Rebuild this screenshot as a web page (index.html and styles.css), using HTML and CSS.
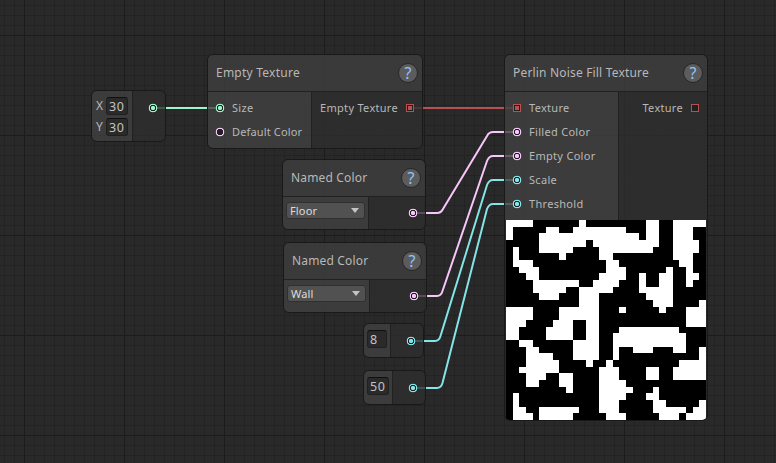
FILE: index.html
```
<!DOCTYPE html>
<html lang="en">
<head>
<meta charset="utf-8">
<title>Texture Graph</title>
<link rel="stylesheet" href="styles.css">
</head>
<body>
<main class="canvas">
  <svg class="wires" width="776" height="463" fill="none" stroke-width="2">
    <path class="vec" d="M153 108H220"/>
    <path class="tex" d="M410 108H517"/>
    <path class="col" d="M413 213H437Q441 213 443 209L487 136Q489 132 493 132H517"/>
    <path class="col" d="M414 296H437Q441 296 442.500 291L487 161Q489 156 493 156H517"/>
    <path class="num" d="M411 341H435Q439 341 440.500 336L487 185Q489 180 493 180H517"/>
    <path class="num" d="M413 388H437Q441 388 442.500 383L487 209Q489 204 493 204H517"/>
  </svg>

  <section class="node n-vector">
    <div class="body">
      <div class="left fields">
        <label class="field"><span>X</span><b class="box">30</b></label>
        <label class="field"><span>Y</span><b class="box">30</b></label>
      </div>
      <div class="right"><div class="port out"><i class="pin vec on"></i></div></div>
    </div>
  </section>

  <section class="node n-empty">
    <header><h2>Empty Texture</h2><span class="help">?</span></header>
    <div class="body">
      <div class="left ports">
        <div class="port"><i class="pin vec on"></i><span>Size</span></div>
        <div class="port"><i class="pin col"></i><span class="tight">Default Color</span></div>
      </div>
      <div class="right ports"><div class="port out"><span>Empty Texture</span><i class="pin tex on"></i></div></div>
    </div>
  </section>

  <section class="node n-floor named">
    <header><h2>Named Color</h2><span class="help">?</span></header>
    <div class="body">
      <div class="left"><div class="select">Floor</div></div>
      <div class="right"><div class="port out"><i class="pin col on"></i></div></div>
    </div>
  </section>

  <section class="node n-wall named">
    <header><h2>Named Color</h2><span class="help">?</span></header>
    <div class="body">
      <div class="left"><div class="select">Wall</div></div>
      <div class="right"><div class="port out"><i class="pin col on"></i></div></div>
    </div>
  </section>

  <section class="node n-eight number">
    <div class="body">
      <div class="left"><b class="box">8</b></div>
      <div class="right"><div class="port out"><i class="pin num on"></i></div></div>
    </div>
  </section>

  <section class="node n-fifty number">
    <div class="body">
      <div class="left"><b class="box">50</b></div>
      <div class="right"><div class="port out"><i class="pin num on"></i></div></div>
    </div>
  </section>

  <section class="node n-perlin">
    <header><h2>Perlin Noise Fill Texture</h2><span class="help">?</span></header>
    <div class="body">
      <div class="left ports">
        <div class="port"><i class="pin tex on"></i><span>Texture</span></div>
        <div class="port"><i class="pin col on"></i><span>Filled Color</span></div>
        <div class="port"><i class="pin col on"></i><span>Empty Color</span></div>
        <div class="port"><i class="pin num on"></i><span>Scale</span></div>
        <div class="port"><i class="pin num on"></i><span>Threshold</span></div>
      </div>
      <div class="right ports"><div class="port out"><span>Texture</span><i class="pin tex"></i></div></div>
    </div>
    <svg class="preview" viewBox="0 0 30 30" shape-rendering="crispEdges"><path id="noise" fill="#fff"/></svg>
  </section>
</main>
<script src="noise.js"></script>
</body>
</html>
```
FILE: noise.js
```
// White runs of each texture row, as first-last cell.
const rows = [
  "0-3 11-11 21-22 25-29",
  "0-0 6-7 10-17 21-22 25-27",
  "0-0 5-19 21-22 25-27",
  "5-11 13-22 25-28",
  "1-1 5-9 14-21 25-28",
  "1-1 8-8 14-15 25-27",
  "1-3 15-16 26-27",
  "2-4 15-17 24-24 27-27",
  "3-4 14-17 20-20 23-24 27-28",
  "4-10 13-16 20-20 23-24 27-27",
  "4-8 11-15 20-24",
  "5-7 11-13 21-24",
  "11-13 22-24 29-29",
  "0-3 8-13 17-17 23-23 27-29",
  "0-3 8-13 27-29",
  "0-2 7-9 12-13 27-29",
  "0-1 6-9 12-13 17-25",
  "0-1 6-9 12-13 16-26",
  "2-3 10-13 16-26",
  "3-4 10-13 16-16 19-21 25-26 29-29",
  "3-6 10-13 16-16 29-29",
  "3-7 12-12 15-15 26-29",
  "2-7 14-16 21-22 25-29",
  "3-5 8-9 14-16 21-22 25-29",
  "3-4 8-9 14-17",
  "9-9 14-18 22-22",
  "1-1 14-17 21-22",
  "1-1 14-16 22-23 29-29",
  "1-2 5-10 14-16 22-26 28-29",
  "1-3 5-9 15-17 23-25 27-29"
];
const d = rows.map((row, y) => row.split(" ").map(run => {
  const [a, b] = run.split("-").map(Number);
  return `M${a} ${y}H${b + 1}V${y + 1}H${a}Z`;
}).join("")).join("");
document.getElementById("noise").setAttribute("d", d);
```
FILE: styles.css
```
* { box-sizing: border-box; }
body { margin: 0; font-family: "Noto Sans", "Open Sans", sans-serif; color: #b8b8b8; }

.canvas {
  position: relative;
  width: 776px;
  height: 463px;
  overflow: hidden;
  background-color: #292929;
  background-image:
    linear-gradient(90deg, #1c1c1c 1px, transparent 1px),
    linear-gradient(#1c1c1c 1px, transparent 1px),
    linear-gradient(90deg, #232323 1px, transparent 1px),
    linear-gradient(#232323 1px, transparent 1px);
  background-size: 100px 100px, 100px 100px, 10px 10px, 10px 10px;
  background-position: 24px 35px, 24px 35px, 4px 5px, 4px 5px;
}
.wires { position: absolute; left: 0; top: 0; }

.vec { --c: #9cf5cb; }
.tex { --c: #b84f50; }
.col { --c: #f7c6fa; }
.num { --c: #84e4e7; }
.wires path { stroke: var(--c); }

.node {
  position: absolute;
  display: flex;
  flex-direction: column;
  border: 1px solid #191919;
  border-radius: 6px;
  overflow: hidden;
}
.n-vector { left: 91px; top: 90px; width: 75px; height: 52px; --split: 40px; }
.n-empty { left: 207px; top: 54px; width: 216px; height: 95px; --split: 103px; }
.n-floor { left: 282px; top: 159px; width: 144px; height: 71px; --split: 85px; }
.n-wall { left: 283px; top: 242px; width: 144px; height: 71px; --split: 85px; }
.n-eight { left: 363px; top: 323px; width: 61px; height: 35px; --split: 26px; }
.n-fifty { left: 363px; top: 370px; width: 63px; height: 35px; --split: 28px; }
.n-perlin { left: 504px; top: 54px; width: 204px; height: 367px; --split: 113px; }

header {
  display: flex;
  flex: none;
  align-items: center;
  justify-content: space-between;
  height: 37px;
  padding: 0 4px 0 8px;
  border-bottom: 1px solid #212121;
  background: rgba(63, 63, 63, .8);
}
h2 { margin: 0; padding-bottom: 2px; font-size: 12px; font-weight: 400; white-space: nowrap; letter-spacing: .24px; }
.n-perlin h2 { letter-spacing: .18px; }
.n-floor h2, .n-wall h2 { letter-spacing: .16px; }
.help {
  width: 20px;
  height: 20px;
  border: 1px solid #262626;
  border-radius: 50%;
  background: #5c5c5c;
  color: #8fc4ff;
  font-size: 16px;
  line-height: 18px;
  text-align: center;
}

.body { display: flex; flex: 1; min-height: 0; }
.left { flex: none; width: calc(var(--split) + 1px); border-right: 1px solid #212121; background: rgba(65, 65, 65, .8); }
.right { flex: 1; background: rgba(46, 46, 46, .8); }
.ports { padding-top: 4px; }
.port { display: flex; align-items: center; height: 24px; padding-left: 8px; gap: 8px; font-size: 11px; letter-spacing: .3px; white-space: nowrap; }
.port span { padding-bottom: 2px; }
.port .tight { letter-spacing: .15px; }
.port.out { justify-content: flex-end; padding: 0 8px 0 0; }

.pin {
  flex: none;
  width: 10px;
  height: 10px;
  margin: 0 -1px;
  --core: #202020;
  background: radial-gradient(circle, var(--core) 1.900px, #202020 2.400px, #202020 2.900px, var(--c) 3.300px, var(--c) 4.100px, transparent 4.600px);
}
.pin.on { --core: var(--c); }
.pin.tex { width: 8px; height: 8px; margin: 0; padding: 1px; border: 1px solid var(--c); background: #202020; }
.pin.tex.on { background: linear-gradient(var(--c), var(--c)) content-box, #202020; }

.box {
  display: block;
  height: 18px;
  border: 1px solid #202020;
  border-top-color: #101010;
  border-radius: 3px;
  background: #2a2a2a;
  color: #c4c4c4;
  font-size: 12.500px;
  font-weight: 400;
  line-height: 18px;
  letter-spacing: .5px;
  padding-left: 2px;
}
.fields { display: flex; flex-direction: column; gap: 3px; padding: 6px 4px 0 4px; }
.field { display: flex; align-items: center; justify-content: space-between; font-size: 12px; line-height: 16px; }
.field .box { width: 22px; }
.n-vector .port { margin-top: 5px; }
.number .left { padding: 6px 3px 0; }
.number .port { margin-top: 5px; }

.select {
  position: relative;
  width: 79px;
  height: 17px;
  margin: 5px 0 0 3px;
  padding-left: 3px;
  border: 1px solid #303030;
  border-radius: 3px;
  background: #515151;
  color: #dcdcdc;
  font-size: 11px;
  line-height: 15px;
  letter-spacing: .15px;
}
.select::after {
  content: "";
  position: absolute;
  right: 5px;
  top: 5px;
  border: 4px solid transparent;
  border-top: 5px solid #c4c4c4;
  border-bottom: 0;
}
.named .port { margin-top: 4px; }
.preview { flex: none; width: 200px; height: 200px; margin-left: 1px; background: #000; }
```
